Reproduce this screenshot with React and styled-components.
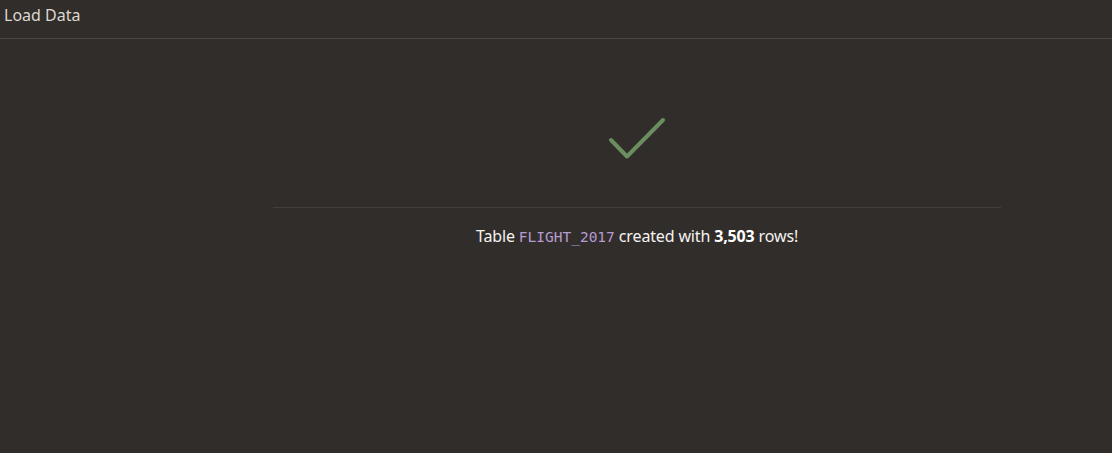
import styled, { createGlobalStyle } from 'styled-components';

const GlobalStyle = createGlobalStyle`
  html, body {
    margin: 0;
    padding: 0;
    background: #312d2a;
  }
  body {
    font-family: 'Noto Sans', 'Open Sans', sans-serif;
    color: #f1efed;
  }
`;

const App = () => {
  return (
    <>
      <GlobalStyle />
      <Page>
        <Header>
          <Title>Load Data</Title>
        </Header>
        <Body>
          <Side />
          <Main>
            <CheckWrap>
              <svg width="64" height="48" viewBox="0 0 64 48">
                <path
                  d="M6 25 L22 41.5 L58 5"
                  fill="none"
                  stroke="#6a8e60"
                  strokeWidth="4"
                  strokeLinecap="round"
                  strokeLinejoin="round"
                />
              </svg>
            </CheckWrap>
            <Divider />
            <Message>
              Table <Code>FLIGHT_2017</Code> created with <strong>3,503</strong> rows!
            </Message>
          </Main>
        </Body>
      </Page>
    </>
  );
};

const Page = styled.div`
  min-height: 453px;
  display: flex;
  flex-direction: column;
`;

const Header = styled.header`
  height: 38px;
  border-bottom: 1px solid #4a4541;
  box-sizing: content-box;
  display: flex;
  align-items: flex-start;
  padding: 0 4px;
`;

const Title = styled.h1`
  margin: 0;
  padding-top: 4px;
  font-size: 16px;
  font-weight: 400;
  line-height: 22px;
  color: #dcd7d1;
`;

const Body = styled.div`
  display: flex;
  flex: 1;
`;

const Side = styled.div`
  width: 162px;
  flex-shrink: 0;
`;

const Main = styled.main`
  flex: 1;
  display: flex;
  flex-direction: column;
  align-items: center;
  padding-top: 76px;
`;

const CheckWrap = styled.div`
  height: 48px;
  svg {
    display: block;
  }
`;

const Divider = styled.hr`
  width: 728px;
  margin: 44px 0 0;
  border: 0;
  border-top: 1px solid #433e3a;
`;

const Message = styled.p`
  margin: 16px 0 0;
  font-size: 16px;
  line-height: 24px;
  letter-spacing: -0.15px;
  color: #f5f3f1;

  strong {
    font-weight: 700;
    color: #ffffff;
  }
`;

const Code = styled.code`
  font-family: 'DejaVu Sans Mono', 'Liberation Mono', monospace;
  font-size: 14.5px;
  letter-spacing: 0;
  color: #b69bd2;
`;

export default App;
